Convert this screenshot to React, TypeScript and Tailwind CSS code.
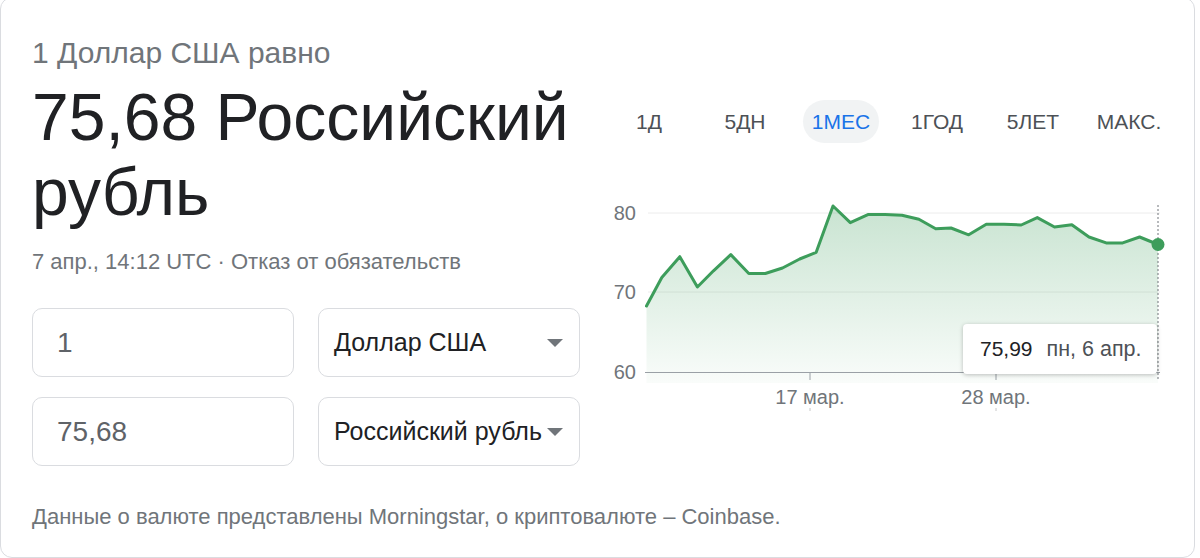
import React from "react";

const pts: [number, number][] = [
  [646.5, 306], [661.8, 277.5], [679.8, 256.7], [697.4, 287], [713.5, 270.8],
  [730.8, 254.6], [748.8, 273.5], [765.3, 273.5], [782.5, 268], [799.7, 259],
  [816.2, 252.3], [833, 206], [850.3, 222.7], [867.9, 214.6], [885.1, 214.6],
  [902, 215.3], [918.9, 219.3], [935.7, 228.7], [951, 228], [968.7, 234.8],
  [986.3, 224.3], [1004, 224.3], [1021.2, 225], [1037.3, 217.6], [1054.5, 227],
  [1071.8, 224.7], [1089, 237], [1106.2, 242.9], [1122.7, 242.9], [1139.6, 237],
  [1158, 244.5],
];

const OX = 601;
const OY = 190;

function Chart() {
  const line = pts
    .map(([x, y], i) => `${i ? "L" : "M"}${(x - OX).toFixed(1)} ${(y - OY).toFixed(1)}`)
    .join(" ");
  const area = `${line} L${1158 - OX} ${383 - OY} L${646.5 - OX} ${383 - OY} Z`;
  const font = "'Liberation Sans', Arial, sans-serif";
  return (
    <svg width={593} height={230} className="block" viewBox="0 0 593 230">
      <defs>
        <linearGradient id="g" x1="0" y1="0" x2="0" y2="1" gradientUnits="objectBoundingBox">
          <stop offset="0" stopColor="#3d9d5b" stopOpacity="0.28" />
          <stop offset="1" stopColor="#3d9d5b" stopOpacity="0.03" />
        </linearGradient>
      </defs>
      <line x1={648 - OX} x2={1160 - OX} y1={213 - OY} y2={213 - OY} stroke="#ececec" strokeWidth="1" />
      <line x1={648 - OX} x2={1160 - OX} y1={292 - OY} y2={292 - OY} stroke="#ececec" strokeWidth="1" />
      <path d={area} fill="url(#g)" />
      <line x1={645 - OX} x2={1160 - OX} y1={372.5 - OY} y2={372.5 - OY} stroke="#9aa0a6" strokeWidth="1.2" />
      <line x1={810 - OX} x2={810 - OX} y1={372 - OY} y2={380 - OY} stroke="#9aa0a6" strokeWidth="1" />
      <line x1={996 - OX} x2={996 - OX} y1={372 - OY} y2={380 - OY} stroke="#9aa0a6" strokeWidth="1" />
      <line x1={810 - OX} x2={810 - OX} y1={408 - OY} y2={411 - OY} stroke="#c8c8c8" strokeWidth="1" />
      <line x1={996 - OX} x2={996 - OX} y1={408 - OY} y2={411 - OY} stroke="#c8c8c8" strokeWidth="1" />
      <line x1={1158 - OX} x2={1158 - OX} y1={205 - OY} y2={380 - OY} stroke="#70757a" strokeWidth="1" strokeDasharray="2 2" />
      <path d={line} fill="none" stroke="#3d9d5b" strokeWidth="3" strokeLinejoin="round" strokeLinecap="round" />
      <circle cx={1158 - OX} cy={244.5 - OY} r={6.5} fill="#3d9d5b" />
      <text x={636 - OX} y={213 - OY} textAnchor="end" dominantBaseline="central" fill="#70757a" fontSize="20" fontFamily={font}>80</text>
      <text x={636 - OX} y={292 - OY} textAnchor="end" dominantBaseline="central" fill="#70757a" fontSize="20" fontFamily={font}>70</text>
      <text x={636 - OX} y={372 - OY} textAnchor="end" dominantBaseline="central" fill="#70757a" fontSize="20" fontFamily={font}>60</text>
      <text x={810 - OX} y={397 - OY} textAnchor="middle" dominantBaseline="central" fill="#70757a" fontSize="20" fontFamily={font}>17 мар.</text>
      <text x={996 - OX} y={397 - OY} textAnchor="middle" dominantBaseline="central" fill="#70757a" fontSize="20" fontFamily={font}>28 мар.</text>
    </svg>
  );
}

function Caret() {
  return (
    <svg width="16" height="8" viewBox="0 0 16 8" className="absolute right-[16px] top-1/2 -translate-y-1/2">
      <path d="M0 0 L16 0 L8 8 Z" fill="#70757a" />
    </svg>
  );
}

export default function App() {
  const tabs = ["1Д", "5ДН", "1МЕС", "1ГОД", "5ЛЕТ", "МАКС."];
  return (
    <div className="w-[1200px] h-[558px] overflow-hidden bg-white font-['Liberation_Sans',Arial,sans-serif]">
      <div className="w-[1195px] h-[561px] -mt-[3px] border border-[#dadce0] rounded-[12px] bg-white flex pt-px">
        <div className="w-[600px] shrink-0 pl-[31px] pt-[38px]">
          <div className="text-[30px] leading-[32px] text-[#70757a] whitespace-nowrap">1 Доллар США равно</div>
          <div className="mt-[11px] text-[66px] leading-[75px] text-[#202124]">75,68 Российский рубль</div>
          <div className="mt-[18px] text-[22px] leading-[28px] text-[#70757a] whitespace-nowrap">
            7 апр., 14:12 UTC · Отказ от обязательств
          </div>
          <div className="mt-[32px] grid grid-cols-[262px_262px] gap-x-[24px] gap-y-[20px]">
            <div className="h-[69px] border border-[#dadce0] rounded-[10px] flex items-center pl-[24px] text-[28px] text-[#5f6368]">
              1
            </div>
            <div className="relative h-[69px] border border-[#dadce0] rounded-[10px] flex items-center pl-[15px] text-[25px] text-[#202124] whitespace-nowrap">
              Доллар США
              <Caret />
            </div>
            <div className="h-[69px] border border-[#dadce0] rounded-[10px] flex items-center pl-[24px] text-[28px] text-[#5f6368]">
              75,68
            </div>
            <div className="relative h-[69px] border border-[#dadce0] rounded-[10px] flex items-center pl-[15px] text-[25px] text-[#202124] whitespace-nowrap">
              Российский рубль
              <Caret />
            </div>
          </div>
          <div className="mt-[37px] text-[22px] leading-[28px] text-[#70757a] whitespace-nowrap">
            Данные о валюте представлены Morningstar, о криптовалюте – Coinbase.
          </div>
        </div>
        <div className="flex-1 pt-[101px]">
          <div className="grid grid-cols-[repeat(6,96px)]">
            {tabs.map((t) => (
              <div key={t} className="flex justify-center">
                <span
                  className={
                    t === "1МЕС"
                      ? "h-[43px] px-[9px] rounded-full flex items-center text-[21px] text-[#1a73e8] bg-[#f1f3f4]"
                      : "h-[43px] px-[9px] rounded-full flex items-center text-[21px] text-[#4d5156]"
                  }
                >
                  {t}
                </span>
              </div>
            ))}
          </div>
          <div className="relative mt-[47px]">
            <Chart />
            <div className="absolute left-[362px] top-[134px] w-[194px] h-[50px] bg-white rounded-[4px] shadow-[0_1px_4px_rgba(0,0,0,0.25)] flex items-center pl-[17px] text-[21px] whitespace-nowrap">
              <span className="text-[#202124]">75,99</span>
              <span className="ml-[14px] text-[21.5px] text-[#4d5156]">пн, 6 апр.</span>
            </div>
          </div>
        </div>
      </div>
    </div>
  );
}
